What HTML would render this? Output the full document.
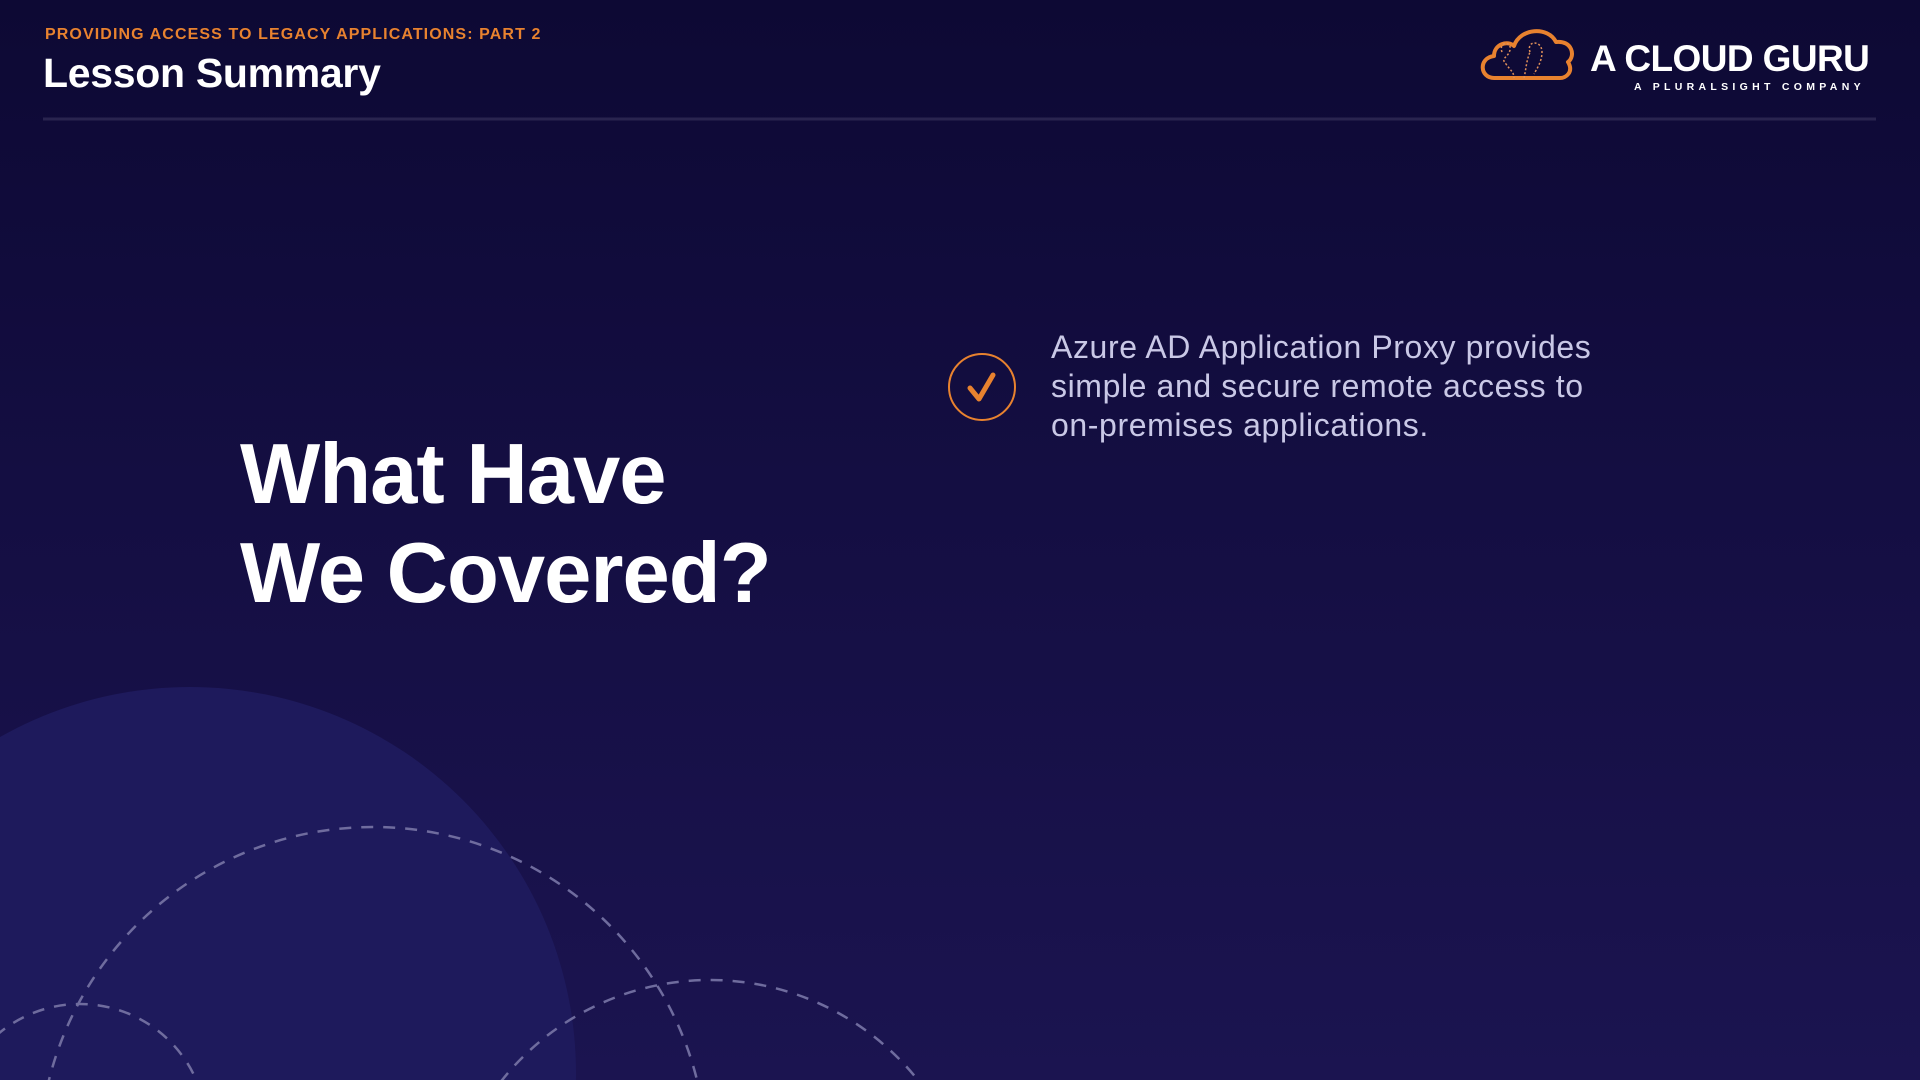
<!DOCTYPE html>
<html style="overflow:hidden"><head><meta charset="utf-8"><style>
html,body{margin:0;padding:0;width:1920px;height:1080px;overflow:hidden}
body{position:relative;background:linear-gradient(180deg,#0d0934 0%,#140e42 45%,#1b1450 100%);font-family:"Liberation Sans",sans-serif}
.abs{position:absolute}
svg{display:block}
</style></head><body>
<svg class="abs" style="left:0;top:0" width="1920" height="1080">
<circle cx="190" cy="1073" r="386" fill="#1e1a5c"/>
<g fill="none" stroke="#6f6c9e" stroke-width="2.5" stroke-dasharray="12 10">
<circle cx="373" cy="1161" r="334"/>
<circle cx="710" cy="1246" r="266"/>
<circle cx="80" cy="1131" r="127"/>
</g>
<line x1="43" y1="119" x2="1876" y2="119" stroke="#29244f" stroke-width="3"/>
<circle cx="982" cy="387" r="33" fill="none" stroke="#e8822f" stroke-width="2"/>
<path d="M970 388 L979 399 L993 375" fill="none" stroke="#e8822f" stroke-width="5" stroke-linecap="round" stroke-linejoin="round"/>
<path d="M1494 78 C1480 78 1478 58 1494 56 C1494 44 1508 40 1514 46 C1520 28 1548 26 1556 42 C1572 40 1576 56 1568 62 C1574 72 1566 78 1560 78 Z" fill="none" stroke="#e8822f" stroke-width="4" stroke-linejoin="round"/>
<g fill="none" stroke="#e0905a" stroke-width="1.5" stroke-dasharray="2 2">
<path d="M1502 52 C1498 42 1512 40 1510 50 C1508 58 1500 58 1506 64 C1510 70 1514 72 1514 78"/>
<path d="M1530 52 C1526 40 1542 40 1542 52 C1542 62 1536 70 1534 74 M1524 78 C1526 70 1526 62 1530 52"/>
</g>
</svg>
<div class="abs" style="left:45px;top:26px;color:#e8822f;font-weight:bold;font-size:16px;letter-spacing:1.1px">PROVIDING ACCESS TO LEGACY APPLICATIONS: PART 2</div>
<div class="abs" style="left:43px;top:50px;color:#fff;font-weight:bold;font-size:41px;letter-spacing:-0.3px">Lesson Summary</div>
<div class="abs" style="left:1590px;top:38px;color:#fff;font-weight:bold;font-size:37px;letter-spacing:-0.6px">A CLOUD GURU</div>
<div class="abs" style="left:1634px;top:81px;color:#fff;font-weight:bold;font-size:10.5px;letter-spacing:4.3px">A PLURALSIGHT COMPANY</div>
<div class="abs" style="left:240px;top:425px;color:#fff;font-weight:bold;font-size:85px;line-height:99px;letter-spacing:-1px">What Have<br>We Covered?</div>
<div class="abs" style="left:1051px;top:328px;color:#c9c8e6;font-size:32px;line-height:39px;letter-spacing:0.6px">Azure AD Application Proxy provides<br>simple and secure remote access to<br>on-premises applications.</div>
</body></html>
